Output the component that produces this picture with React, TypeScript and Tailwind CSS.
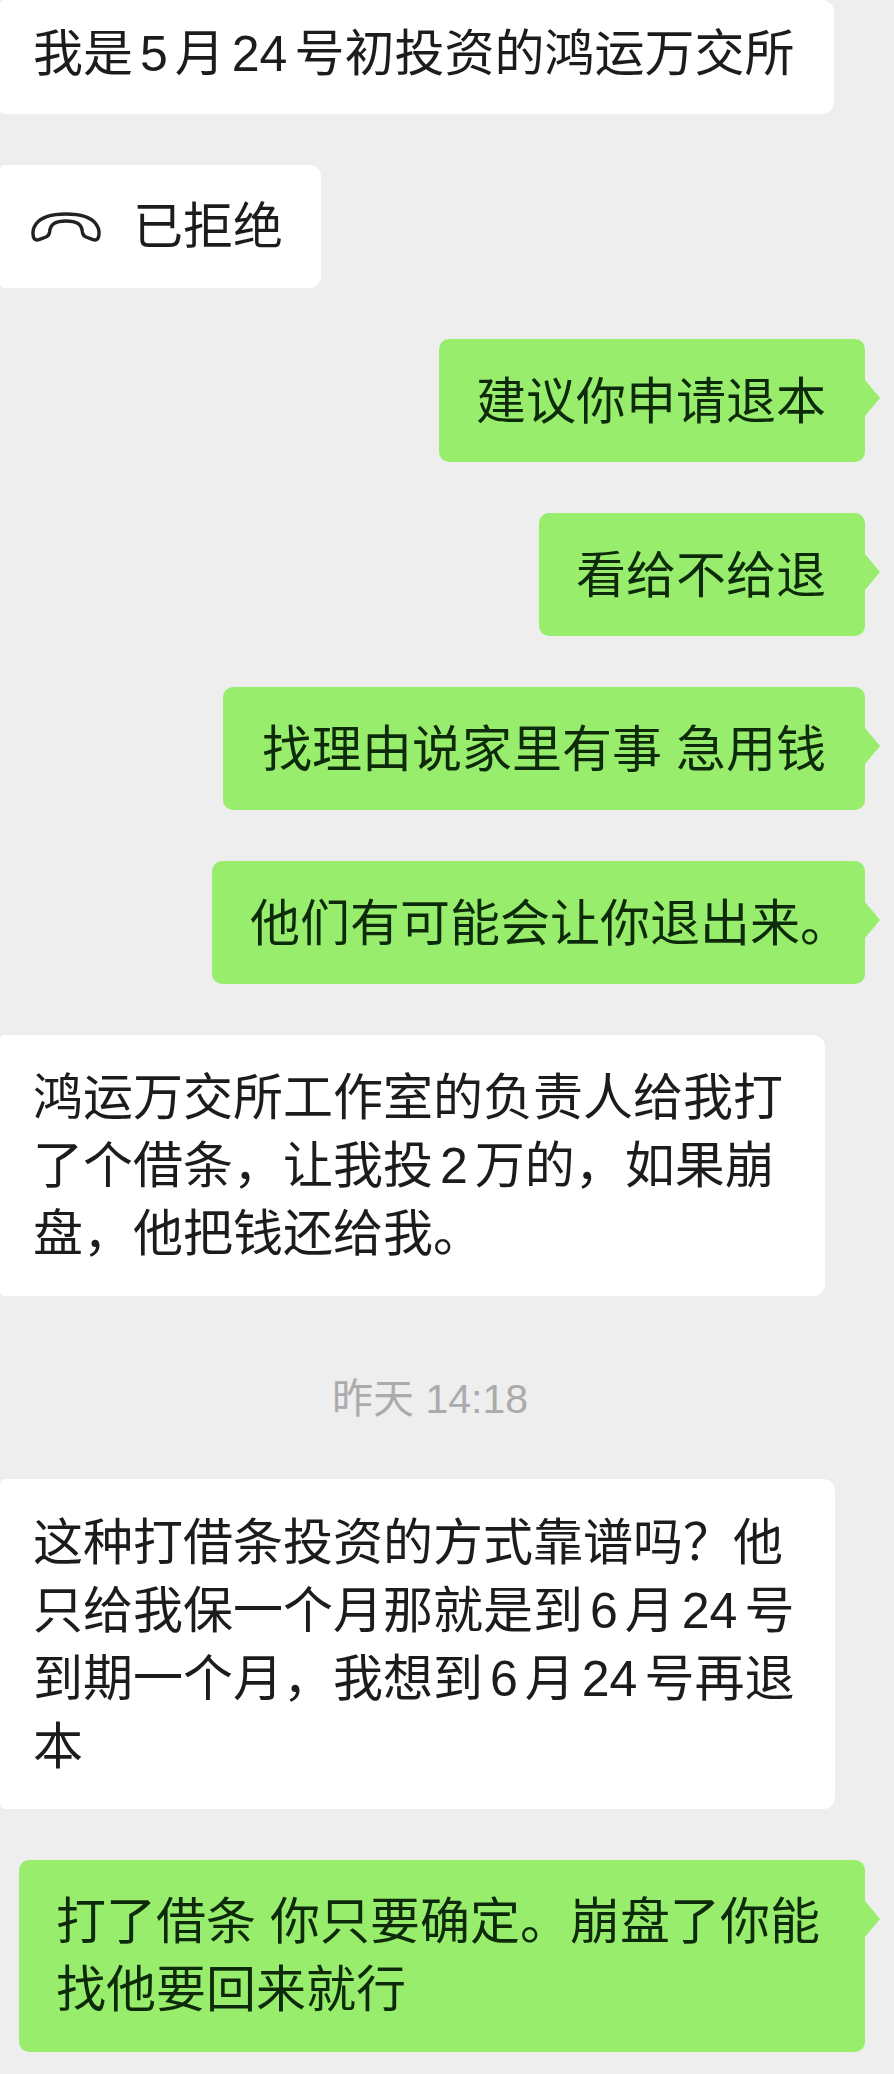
import { ReactNode } from 'react';

// Digits get a little air on both sides, like the auto-spacing in the chat app.
function Num({ children }: { children: ReactNode }) {
  return <span className="mx-[7px]">{children}</span>;
}

function Incoming({ children, className = '' }: { children: ReactNode; className?: string }) {
  return (
    <div className={`self-start bg-white rounded-r-[12px] rounded-l-[5px] pl-[33px] ${className}`}>
      {children}
    </div>
  );
}

function Outgoing({ children, className = '' }: { children: ReactNode; className?: string }) {
  return (
    <div className={`relative self-end mr-[29px] bg-[#98ee6c] rounded-[10px] pr-[39px] text-[#0d2b0b] ${className}`}>
      {children}
      <div className="absolute left-full top-[41px] w-[15px] h-[36px] bg-[#98ee6c] [clip-path:polygon(0_0,100%_50%,0_100%)]" />
    </div>
  );
}

function HangupIcon() {
  return (
    <svg width="70" height="30" viewBox="0 0 70 30" fill="none" stroke="#222222" strokeWidth="3.4" strokeLinejoin="round" className="shrink-0">
      <path d="M35 2C21 2 10 5 5 12C2 16 1.500 21 2.500 25C3.200 27.800 5.500 28.500 8 27.600L15 25C17.500 24 18.300 22.300 18.600 20C19 16 20.500 13 23 11.500C26 9.800 30 9 35 9C40 9 44 9.800 47 11.500C49.500 13 51 16 51.400 20C51.700 22.300 52.500 24 55 25L62 27.600C64.500 28.500 66.800 27.800 67.500 25C68.500 21 68 16 65 12C60 5 49 2 35 2Z" />
    </svg>
  );
}

export default function App() {
  return (
    <div className="min-h-screen w-full bg-[#eeeeee] flex flex-col gap-[51px] pb-[23px] text-[50px] leading-[68px] text-[#1c1c1c] font-['Liberation_Sans','Noto_Sans_CJK_SC',sans-serif]">
      <Incoming className="pt-[20px] pb-[26px] pr-[40px]">
        我是<Num>5</Num>月<Num>24</Num>号初投资的鸿运万交所
      </Incoming>

      <Incoming className="!pl-[31px] pr-[38px] pt-[28px] pb-[27px] flex items-center gap-[32px]">
        <HangupIcon />
        <span>已拒绝</span>
      </Incoming>

      <Outgoing className="pl-[37px] pt-[29px] pb-[26px]">建议你申请退本</Outgoing>
      <Outgoing className="pl-[37px] pt-[29px] pb-[26px]">看给不给退</Outgoing>
      <Outgoing className="pl-[39px] pt-[29px] pb-[26px]">找理由说家里有事 急用钱</Outgoing>
      <Outgoing className="pl-[38px] pt-[29px] pb-[26px]">
        他们有可能会让你退出来<span className="inline-block w-[26px]">。</span>
      </Outgoing>

      <Incoming className="pr-[42px] pt-[29px] pb-[28px]">
        鸿运万交所工作室的负责人给我打
        <br />
        了个借条，让我投<Num>2</Num>万的，如果崩
        <br />
        盘，他把钱还给我。
      </Incoming>

      <div className="mt-[28px] mb-[5px] pr-[34px] text-center text-[41px] leading-[48px] text-[#ababab]">昨天 14:18</div>

      <Incoming className="pr-[41px] pt-[30px] pb-[28px]">
        这种打借条投资的方式靠谱吗？他
        <br />
        只给我保一个月那就是到<Num>6</Num>月<Num>24</Num>号
        <br />
        到期一个月，我想到<Num>6</Num>月<Num>24</Num>号再退
        <br />本
      </Incoming>

      <Outgoing className="self-stretch ml-[19px] pl-[37px] pt-[28px] pb-[28px]">
        打了借条 你只要确定。崩盘了你能
        <br />
        找他要回来就行
      </Outgoing>
    </div>
  );
}
